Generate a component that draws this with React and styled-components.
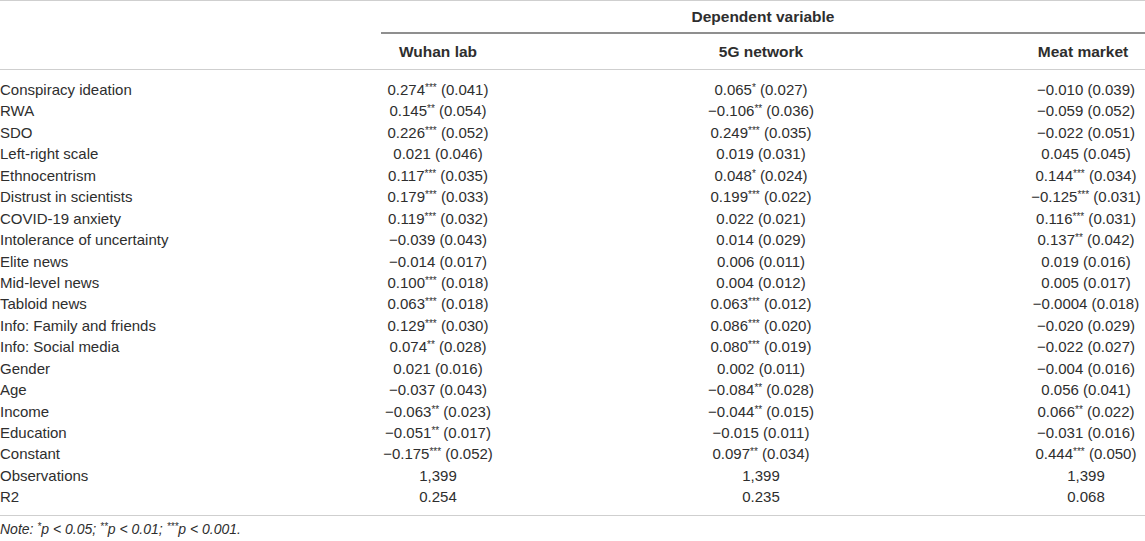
import React from 'react'
import styled, { createGlobalStyle } from 'styled-components'

const GlobalStyle = createGlobalStyle`
    body {
        margin: 0;
        background: #fff;
        font-family: "Liberation Sans", Arial, sans-serif;
        color: #2e2e2e;
    }
`

const COLS = '381px 114px 532px 118px'

const rows = [
    ['Conspiracy ideation', ['0.274', '***', '0.041'], ['0.065', '*', '0.027'], ['−0.010', '', '0.039']],
    ['RWA', ['0.145', '**', '0.054'], ['−0.106', '**', '0.036'], ['−0.059', '', '0.052']],
    ['SDO', ['0.226', '***', '0.052'], ['0.249', '***', '0.035'], ['−0.022', '', '0.051']],
    ['Left-right scale', ['0.021', '', '0.046'], ['0.019', '', '0.031'], ['0.045', '', '0.045']],
    ['Ethnocentrism', ['0.117', '***', '0.035'], ['0.048', '*', '0.024'], ['0.144', '***', '0.034']],
    ['Distrust in scientists', ['0.179', '***', '0.033'], ['0.199', '***', '0.022'], ['−0.125', '***', '0.031']],
    ['COVID-19 anxiety', ['0.119', '***', '0.032'], ['0.022', '', '0.021'], ['0.116', '***', '0.031']],
    ['Intolerance of uncertainty', ['−0.039', '', '0.043'], ['0.014', '', '0.029'], ['0.137', '**', '0.042']],
    ['Elite news', ['−0.014', '', '0.017'], ['0.006', '', '0.011'], ['0.019', '', '0.016']],
    ['Mid-level news', ['0.100', '***', '0.018'], ['0.004', '', '0.012'], ['0.005', '', '0.017']],
    ['Tabloid news', ['0.063', '***', '0.018'], ['0.063', '***', '0.012'], ['−0.0004', '', '0.018']],
    ['Info: Family and friends', ['0.129', '***', '0.030'], ['0.086', '***', '0.020'], ['−0.020', '', '0.029']],
    ['Info: Social media', ['0.074', '**', '0.028'], ['0.080', '***', '0.019'], ['−0.022', '', '0.027']],
    ['Gender', ['0.021', '', '0.016'], ['0.002', '', '0.011'], ['−0.004', '', '0.016']],
    ['Age', ['−0.037', '', '0.043'], ['−0.084', '**', '0.028'], ['0.056', '', '0.041']],
    ['Income', ['−0.063', '**', '0.023'], ['−0.044', '**', '0.015'], ['0.066', '**', '0.022']],
    ['Education', ['−0.051', '**', '0.017'], ['−0.015', '', '0.011'], ['−0.031', '', '0.016']],
    ['Constant', ['−0.175', '***', '0.052'], ['0.097', '**', '0.034'], ['0.444', '***', '0.050']],
    ['Observations', '1,399', '1,399', '1,399'],
    ['R2', '0.254', '0.235', '0.068'],
]

function App() {
    return (
        <>
            <GlobalStyle />
            <Table>
                <GroupHead>
                    <span />
                    <GroupTitle>Dependent variable</GroupTitle>
                </GroupHead>
                <ColHead>
                    <span />
                    <HeadCell>Wuhan lab</HeadCell>
                    <HeadCell>5G network</HeadCell>
                    <HeadCell $shift={-3}>Meat market</HeadCell>
                </ColHead>
                <Body>
                    {rows.map(([label, ...vals]) => (
                        <Row key={label}>
                            <Label>{label}</Label>
                            {vals.map((v, i) => (
                                <Value key={i}>
                                    {typeof v === 'string' ? v : (
                                        <>
                                            {v[0]}{v[1] && <Stars>{v[1]}</Stars>} ({v[2]})
                                        </>
                                    )}
                                </Value>
                            ))}
                        </Row>
                    ))}
                </Body>
                <Note>
                    Note: <Stars>*</Stars>p &lt; 0.05; <Stars>**</Stars>p &lt; 0.01; <Stars>***</Stars>p &lt; 0.001.
                </Note>
            </Table>
        </>
    )
}

export default App

const Table = styled.div`
    width: 1145px;
    border-top: 1px solid #cfcfcf;
    font-size: 15px;
`
const GroupHead = styled.div`
    display: grid;
    grid-template-columns: 381px 1fr;
    height: 33px;
`
const GroupTitle = styled.div`
    display: flex;
    align-items: center;
    justify-content: center;
    font-weight: bold;
    font-size: 15.5px;
    border-bottom: 2px solid #8f8f8f;
`
const ColHead = styled.div`
    display: grid;
    grid-template-columns: ${COLS};
    height: 35px;
    align-items: center;
    border-bottom: 1px solid #cfcfcf;
`
const HeadCell = styled.div`
    text-align: center;
    font-weight: bold;
    font-size: 15.5px;
    white-space: nowrap;
    position: relative;
    left: ${p => p.$shift || 0}px;
`
const Body = styled.div`
    padding: 9px 0 7px;
    border-bottom: 1px solid #cfcfcf;
`
const Row = styled.div`
    display: grid;
    grid-template-columns: ${COLS};
    height: 21.45px;
    line-height: 21.45px;
`
const Label = styled.div`
    white-space: nowrap;
`
const Value = styled.div`
    text-align: center;
    white-space: nowrap;
`
const Stars = styled.sup`
    font-size: 10px;
    line-height: 0;
    vertical-align: 4px;
`
const Note = styled.div`
    font-style: italic;
    font-size: 14px;
    padding-top: 5px;
`
